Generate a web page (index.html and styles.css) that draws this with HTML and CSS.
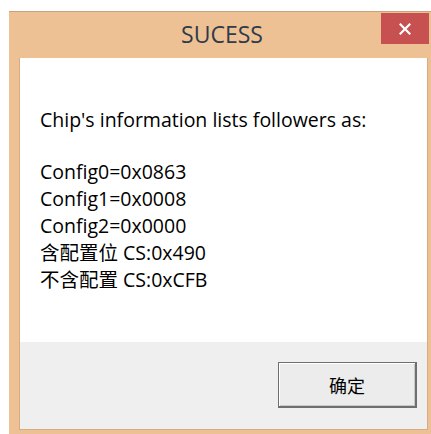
FILE: index.html
```html
<!DOCTYPE html>
<html>
<head>
<meta charset="utf-8">
<link rel="stylesheet" href="styles.css">
</head>
<body>
<div class="window">
  <div class="titlebar">
    <span></span>
    <span class="title">SUCESS</span>
    <button class="close" aria-label="Close">
      <svg width="12" height="12" viewBox="0 0 12 12"><path d="M1.5 1.5 L10.5 10.5 M10.5 1.5 L1.5 10.5" stroke="#fff" stroke-width="2.2" stroke-linecap="square"/></svg>
    </button>
  </div>
  <div class="client">
    <div class="message">
      <p class="lead">Chip's information lists followers as:</p>
      <p class="lines">Config0=0x0863<br>Config1=0x0008<br>Config2=0x0000<br>含配置位 CS:0x490<br>不含配置 CS:0xCFB</p>
    </div>
    <div class="actions">
      <button class="ok">确定</button>
    </div>
  </div>
</div>
</body>
</html>
```
FILE: styles.css
```css
html, body {
  margin: 0;
  padding: 0;
  background: #ffffff;
  overflow: hidden;
  width: 431px;
  height: 434px;
}

.window {
  margin: 11px 0 0 9px;
  width: 426px;
  height: 423px;
  box-sizing: border-box;
  background: #eec195;
  border-top: 1px solid #c9a27c;
  display: flex;
  flex-direction: column;
}

.titlebar {
  height: 46px;
  display: grid;
  grid-template-columns: 1fr auto 1fr;
  align-items: start;
}

.title {
  font-family: "Open Sans", "Noto Sans CJK SC", sans-serif;
  font-size: 23px;
  color: #2f3b48;
  line-height: 1;
  padding-top: 11px;
}

.close {
  justify-self: end;
  margin: 1px 6px 0 0;
  width: 48px;
  height: 31px;
  border: none;
  padding: 0;
  background: #c75050;
  display: flex;
  align-items: center;
  justify-content: center;
}

.client {
  margin-left: 10px;
  width: 409px;
  height: 372px;
  box-sizing: border-box;
  border-left: 1px solid #d8ab82;
  border-right: 1px solid #d8ab82;
  border-bottom: 1px solid #d8ab82;
  display: flex;
  flex-direction: column;
}

.message {
  background: #ffffff;
  height: 284px;
  padding: 48px 0 0 20px;
  box-sizing: border-box;
  font-family: "Open Sans", "Noto Sans CJK SC", sans-serif;
  font-size: 19.5px;
  color: #000000;
}

.message p {
  margin: 0;
  line-height: 27px;
}

.message .lead {
  margin-bottom: 25px;
}

.actions {
  flex: 1;
  background: #efefef;
  display: flex;
  justify-content: flex-end;
  align-items: flex-start;
  padding: 20px 10px 0 0;
}

.ok {
  width: 139px;
  height: 46px;
  box-sizing: border-box;
  border: 1px solid #6f6f6f;
  border-right-width: 2px;
  border-bottom-width: 2px;
  background: #ececec;
  box-shadow: inset 1px 1px 0 #ffffff, inset -1px -1px 0 #c8c8c8;
  font-family: "Noto Sans CJK SC", sans-serif;
  font-size: 18px;
  color: #000000;
  padding: 0;
}
```
